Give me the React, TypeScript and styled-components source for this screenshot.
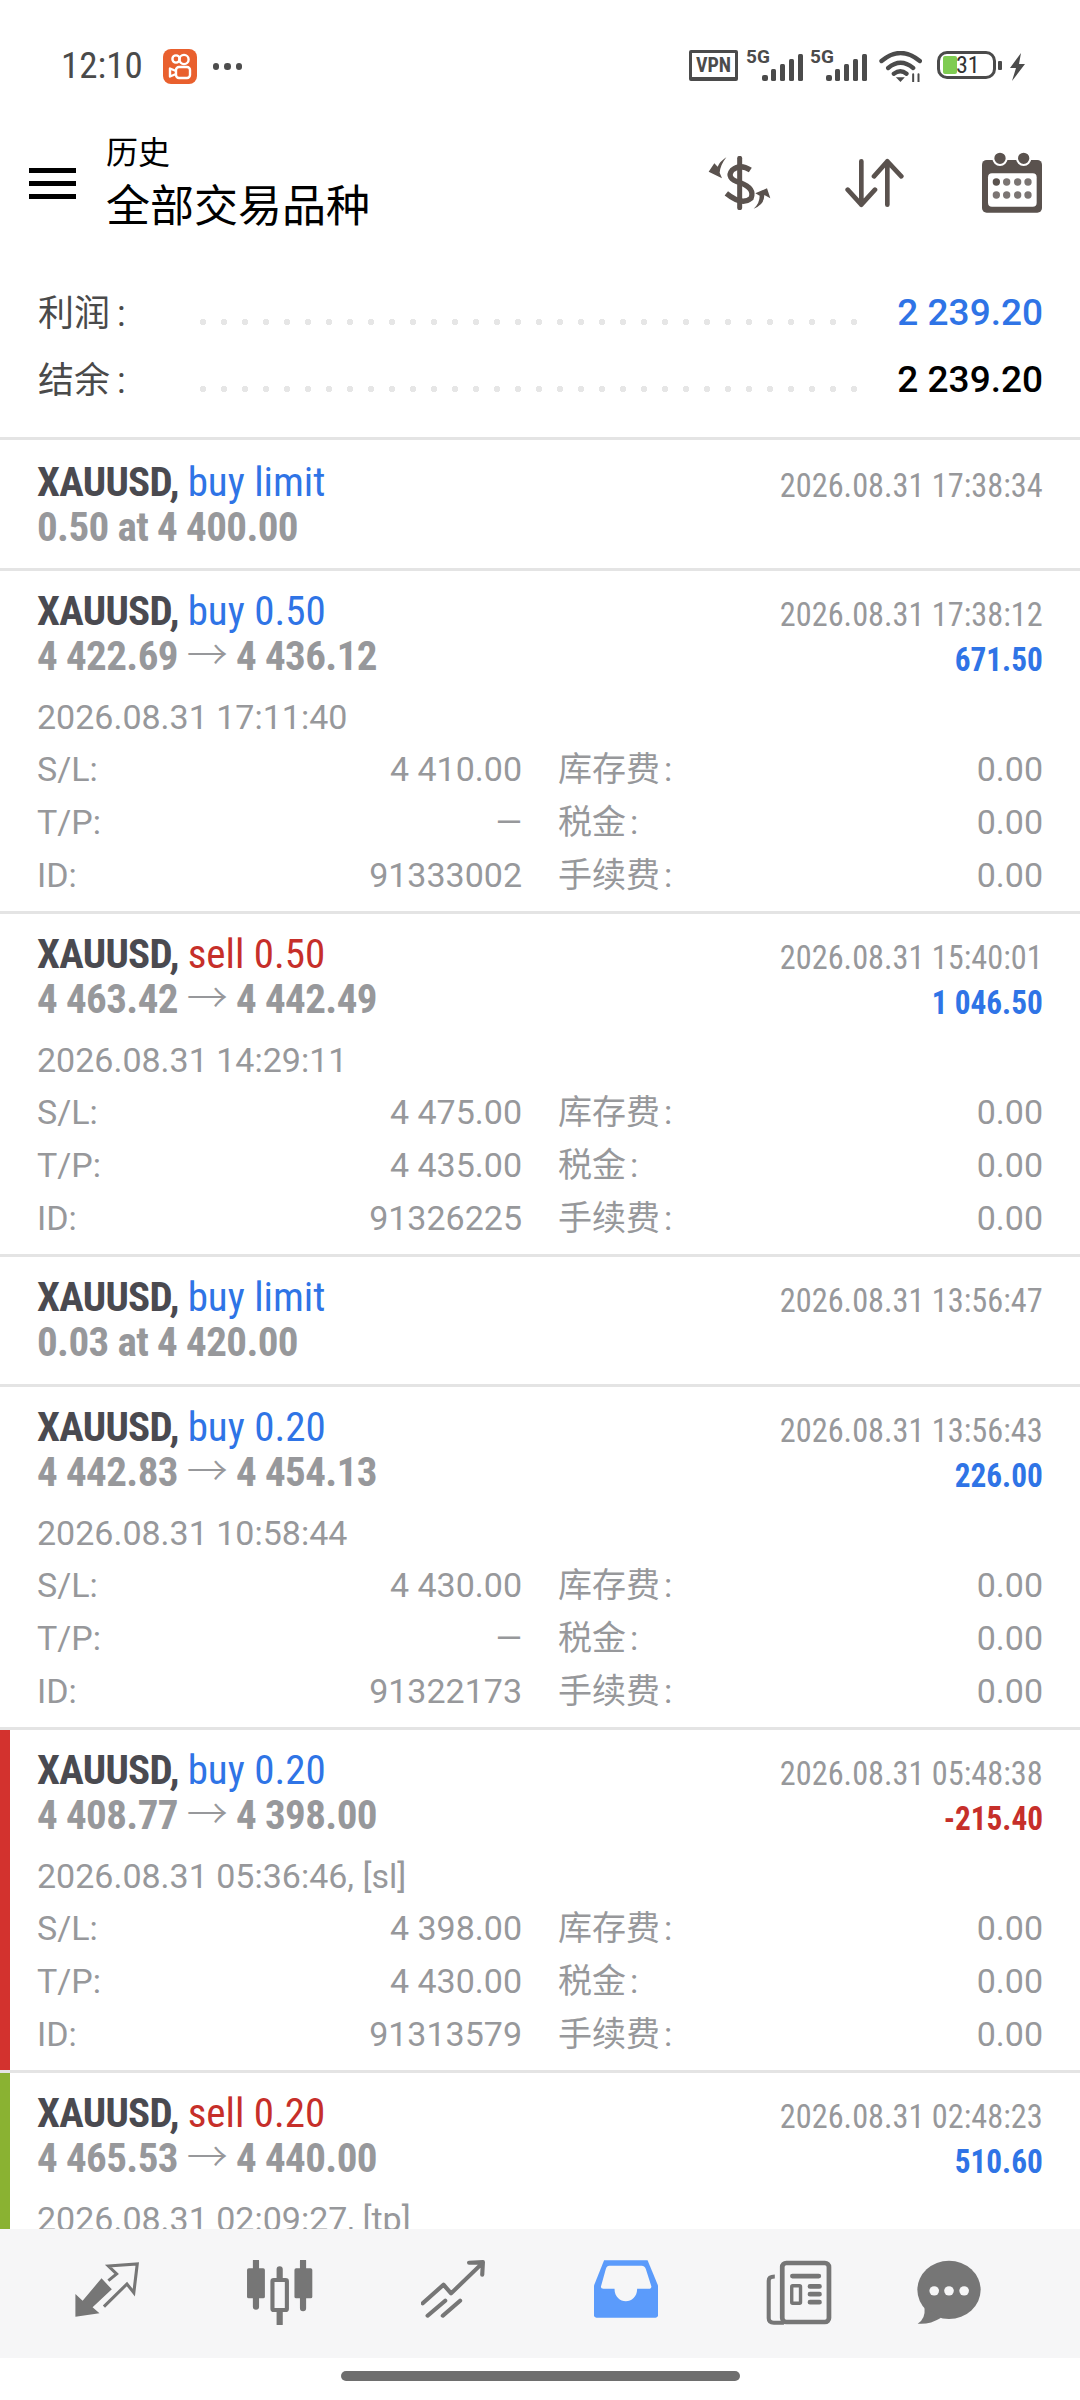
import React from "react";
import styled, { createGlobalStyle } from "styled-components";

const GlobalStyle = createGlobalStyle`
  html, body { margin: 0; padding: 0; background: #fff; }
  body { font-family: Roboto, "Noto Sans CJK SC", sans-serif; }
`;

const ICON = "#5a524e";
const TAB = "#767676";
const BLUE = "#2f74e6";
const RED = "#c62f2a";
const GRAY = "#97989b";
const CONDENSED = `"Roboto Condensed", Roboto, "Noto Sans CJK SC", sans-serif`;

const Page = styled.div`
  width: 1080px;
  height: 2400px;
  display: flex;
  flex-direction: column;
  overflow: hidden;
  background: #fff;
`;

const StatusBar = styled.div`
  height: 130px;
  flex: none;
  box-sizing: border-box;
  padding: 45px 54px 0 61px;
  display: flex;
  align-items: flex-start;
`;
const Clock = styled.span`
  font-family: ${CONDENSED};
  font-stretch: condensed;
  font-size: 37px;
  line-height: 42px;
  color: #4a4a4a;
`;
const AppBadge = styled.span`
  width: 34px;
  height: 35px;
  margin: 4px 0 0 20px;
  border-radius: 8px;
  background: #e9602e;
  display: flex;
  align-items: center;
  justify-content: center;
`;
const MoreDots = styled.span`
  margin: 18px 0 0 16px;
  display: flex;
  gap: 5px;
  i {
    width: 6.5px;
    height: 6.5px;
    border-radius: 50%;
    background: #4d4d4d;
  }
`;
const StatusIcons = styled.div`
  margin-left: auto;
  display: flex;
  align-items: flex-start;
  height: 40px;
`;
const VpnTag = styled.span`
  width: 49px;
  height: 31px;
  box-sizing: border-box;
  margin-top: 5px;
  border: 3px solid #4b4b4b;
  border-bottom-width: 4px;
  border-radius: 2px;
  font-size: 20px;
  font-weight: 700;
  line-height: 24px;
  text-align: center;
  color: #4b4b4b;
  font-family: ${CONDENSED};
`;
const SignalGroup = styled.span<{ $gap: number }>`
  position: relative;
  width: 57px;
  height: 31px;
  margin-top: 5px;
  margin-left: ${({ $gap }) => $gap}px;
  b {
    position: absolute;
    left: 0;
    top: -4px;
    font-size: 19px;
    line-height: 22px;
    font-weight: 700;
    color: #4b4b4b;
  }
  svg {
    position: absolute;
    right: 0;
    bottom: 0;
  }
`;
const WifiIcon = styled.svg`
  margin: 6px 0 0 12px;
`;
const Battery = styled.span`
  position: relative;
  width: 59px;
  height: 28px;
  box-sizing: border-box;
  margin: 6px 0 0 15px;
  border: 3px solid #4b4b4b;
  border-radius: 10px;
  i {
    position: absolute;
    left: 3px;
    top: 2px;
    width: 14px;
    height: 18px;
    background: #7fcc52;
    border-radius: 2px;
  }
  em {
    position: absolute;
    left: 16px;
    top: -3px;
    font-style: normal;
    font-size: 24px;
    line-height: 28px;
    color: #333;
    font-family: ${CONDENSED};
  }
`;
const BatteryCap = styled.span`
  width: 4px;
  height: 9px;
  margin: 16px 0 0 2px;
  background: #4b4b4b;
  border-radius: 1px;
`;
const BoltIcon = styled.svg`
  margin: 8px 0 0 7px;
`;

const Header = styled.header`
  height: 118px;
  flex: none;
  box-sizing: border-box;
  display: flex;
  align-items: flex-start;
  padding-left: 29px;
`;
const MenuButton = styled.span`
  width: 47px;
  height: 31px;
  margin-top: 38px;
  display: flex;
  flex-direction: column;
  justify-content: space-between;
  i {
    height: 5px;
    background: #000;
  }
`;
const Titles = styled.div`
  margin: 3px 0 0 30px;
  color: #000;
`;
const Crumb = styled.div`
  font-size: 32px;
  line-height: 40px;
`;
const Title = styled.div`
  margin-top: 6px;
  font-size: 44px;
  line-height: 56px;
`;
const HeaderActions = styled.div`
  margin-left: auto;
  margin-top: 22px;
  padding-right: 38px;
  display: flex;
  align-items: center;
  gap: 75px;
`;
const SortSlot = styled.span`
  display: flex;
  margin: 0 3px 0 -3px;
`;

const Colon = styled.span`
  margin-left: 4px;
`;
const Summary = styled.section`
  height: 189px;
  flex: none;
  box-sizing: border-box;
  padding: 41px 37px 0 38px;
  display: flex;
  flex-direction: column;
  gap: 23px;
`;
const SummaryRow = styled.div`
  display: flex;
  align-items: center;
  height: 44px;
`;
const SummaryLabel = styled.span`
  width: 162px;
  padding-bottom: 2px;
  font-size: 36px;
  color: #4a4a4a;
  flex: none;
  ${Colon} {
    margin-left: 7px;
  }
`;
const Leader = styled.span`
  width: 660px;
  height: 6px;
  margin-top: 22px;
  background: radial-gradient(circle at 3px 3px, #e6e6e6 3px, transparent 3.4px) 0 0 / 21px 6px repeat-x;
  flex: none;
`;
const SummaryValue = styled.span<{ $color: string }>`
  margin-left: auto;
  padding-top: 2px;
  font-size: 37px;
  font-weight: 500;
  color: ${({ $color }) => $color};
`;

const List = styled.div`
  flex: 1;
  min-height: 0;
  overflow: hidden;
`;
const Trade = styled.article<{ $mark?: string; $height: number }>`
  height: ${({ $height }) => $height}px;
  border-top: 3px solid #e4e4e4;
  padding: 0 37px;
  position: relative;
  &:first-child {
    height: ${({ $height }) => $height - 2}px;
    padding-top: 2px;
  }
  &::before {
    content: "";
    display: ${({ $mark }) => ($mark ? "block" : "none")};
    position: absolute;
    left: 0;
    top: 0;
    bottom: 0;
    width: 10px;
    background: ${({ $mark }) => $mark};
  }
`;
const HeadRow = styled.div`
  display: flex;
  justify-content: space-between;
  height: 45px;
  padding-top: 18px;
`;
const PriceRow = styled.div`
  display: flex;
  justify-content: space-between;
  height: 45px;
`;
const Heading = styled.div`
  font-family: ${CONDENSED};
  font-stretch: condensed;
  font-size: 41px;
  line-height: 45px;
  color: #4a4a50;
  font-weight: 700;
  letter-spacing: -0.7px;
`;
const Side = styled.span<{ $color: string }>`
  font-weight: 400;
  letter-spacing: 0;
  color: ${({ $color }) => $color};
`;
const Stamp = styled.div`
  margin-top: 3px;
  font-family: ${CONDENSED};
  font-stretch: condensed;
  font-size: 34px;
  line-height: 45px;
  color: ${GRAY};
  transform: scaleX(0.95);
  transform-origin: right center;
`;
const Prices = styled(Heading)`
  color: ${GRAY};
  letter-spacing: -0.6px;
`;
const Arrow = styled.span`
  font-family: "Noto Sans CJK SC", sans-serif;
  font-weight: 300;
  line-height: 0;
`;
const Profit = styled.div<{ $color: string }>`
  margin-top: 3px;
  font-family: ${CONDENSED};
  font-stretch: condensed;
  font-size: 34px;
  line-height: 45px;
  font-weight: 700;
  color: ${({ $color }) => $color};
  transform: scaleX(0.92);
  transform-origin: right center;
`;
const OpenTime = styled.div`
  margin-top: 16px;
  font-size: 34px;
  line-height: 44px;
  color: ${GRAY};
`;
const Details = styled.div`
  display: grid;
  grid-template-columns: 485px 485px;
  column-gap: 36px;
  margin-top: 4px;
  font-size: 34px;
  line-height: 53px;
  color: ${GRAY};
`;
const Cell = styled.div`
  display: flex;
  justify-content: space-between;
`;

const TabBar = styled.nav`
  height: 129px;
  flex: none;
  box-sizing: border-box;
  padding-left: 20px;
  background: #f6f6f7;
  display: grid;
  grid-template-columns: repeat(5, 173px) 127px;
  align-items: start;
`;
const TabSlot = styled.span`
  display: flex;
  justify-content: center;
  padding-top: 31px;
`;
const HomeArea = styled.div`
  height: 42px;
  flex: none;
  box-sizing: border-box;
  display: flex;
  justify-content: center;
  padding-top: 13px;
`;
const HomePill = styled.span`
  width: 399px;
  height: 10px;
  border-radius: 5px;
  background: #6e6e6e;
`;

type TradeData = {
  side: string;
  sideColor: string;
  line2: string;
  closed: string;
  height: number;
  profit?: string;
  profitColor?: string;
  opened?: string;
  sl?: string;
  tp?: string;
  id?: string;
  mark?: string;
};

const TRADES: TradeData[] = [
  { height: 128, side: "buy limit", sideColor: BLUE, line2: "0.50 at 4 400.00", closed: "2026.08.31 17:38:34" },
  { height: 340, side: "buy 0.50", sideColor: BLUE, line2: "4 422.69 → 4 436.12", closed: "2026.08.31 17:38:12", profit: "671.50", profitColor: BLUE, opened: "2026.08.31 17:11:40", sl: "4 410.00", tp: "—", id: "91333002" },
  { height: 340, side: "sell 0.50", sideColor: RED, line2: "4 463.42 → 4 442.49", closed: "2026.08.31 15:40:01", profit: "1 046.50", profitColor: BLUE, opened: "2026.08.31 14:29:11", sl: "4 475.00", tp: "4 435.00", id: "91326225" },
  { height: 127, side: "buy limit", sideColor: BLUE, line2: "0.03 at 4 420.00", closed: "2026.08.31 13:56:47" },
  { height: 340, side: "buy 0.20", sideColor: BLUE, line2: "4 442.83 → 4 454.13", closed: "2026.08.31 13:56:43", profit: "226.00", profitColor: BLUE, opened: "2026.08.31 10:58:44", sl: "4 430.00", tp: "—", id: "91322173" },
  { height: 340, side: "buy 0.20", sideColor: BLUE, line2: "4 408.77 → 4 398.00", closed: "2026.08.31 05:48:38", profit: "-215.40", profitColor: RED, opened: "2026.08.31 05:36:46, [sl]", sl: "4 398.00", tp: "4 430.00", id: "91313579", mark: "#d3322e" },
  { height: 340, side: "sell 0.20", sideColor: RED, line2: "4 465.53 → 4 440.00", closed: "2026.08.31 02:48:23", profit: "510.60", profitColor: BLUE, opened: "2026.08.31 02:09:27, [tp]", mark: "#8ab232" },
];

const PriceLine = ({ text }: { text: string }) => {
  const [from, to] = text.split(" → ");
  if (!to) return <Prices>{text}</Prices>;
  return (
    <Prices>
      {from} <Arrow>→</Arrow> {to}
    </Prices>
  );
};

const TradeRow = ({ t }: { t: TradeData }) => (
  <Trade $mark={t.mark} $height={t.height}>
    <HeadRow>
      <Heading>
        XAUUSD, <Side $color={t.sideColor}>{t.side}</Side>
      </Heading>
      <Stamp>{t.closed}</Stamp>
    </HeadRow>
    <PriceRow>
      <PriceLine text={t.line2} />
      {t.profit && <Profit $color={t.profitColor!}>{t.profit}</Profit>}
    </PriceRow>
    {t.opened && <OpenTime>{t.opened}</OpenTime>}
    {t.sl && (
      <Details>
        <Cell><span>S/L:</span><span>{t.sl}</span></Cell>
        <Cell><span>库存费<Colon>:</Colon></span><span>0.00</span></Cell>
        <Cell><span>T/P:</span><span>{t.tp}</span></Cell>
        <Cell><span>税金<Colon>:</Colon></span><span>0.00</span></Cell>
        <Cell><span>ID:</span><span>{t.id}</span></Cell>
        <Cell><span>手续费<Colon>:</Colon></span><span>0.00</span></Cell>
      </Details>
    )}
  </Trade>
);

const SignalBars = () => (
  <svg width="41" height="27" viewBox="0 0 41 27">
    <g fill="#4b4b4b">
      <rect x="0" y="21" width="6" height="6" rx="2" />
      <rect x="9" y="15" width="5" height="12" rx="1.5" />
      <rect x="18" y="10" width="5" height="17" rx="1.5" />
      <rect x="27" y="5" width="5" height="22" rx="1.5" />
      <rect x="36" y="0" width="5" height="27" rx="1.5" />
    </g>
  </svg>
);

const DollarIcon = () => (
  <svg width="65" height="54" viewBox="200 378 195 162" fill={ICON}>
    <path d="M298 385V533" stroke={ICON} strokeWidth="15" strokeLinecap="round" fill="none" />
    <path d="M330 420Q300 400 276 420Q255 445 300 458Q345 475 332 505Q305 528 258 490" stroke={ICON} strokeWidth="16" fill="none" />
    <path d="M258 382Q238 395 232 410L222 400L205 425L245 445L238 428Q240 405 258 382Z" />
    <path d="M340 536Q372 525 372 495L390 505L380 475L345 490L358 497Q358 520 340 536Z" />
  </svg>
);

const SortIcon = () => (
  <svg width="60" height="50" viewBox="615 385 180 150" fill="none" stroke={ICON} strokeWidth="14" strokeLinecap="round" strokeLinejoin="round">
    <path d="M667 395V525M626 480L667 525L708 480M745 395V525M705 440L745 395L787 440" />
  </svg>
);

const CalendarIcon = () => (
  <svg width="60" height="61" viewBox="1020 366 180 183">
    <rect x="1020" y="390" width="180" height="158" rx="14" fill={ICON} />
    <rect x="1038" y="430" width="146" height="100" rx="12" fill="#fff" />
    <circle cx="1074" cy="385" r="20" fill={ICON} stroke="#fff" strokeWidth="6" />
    <circle cx="1145" cy="385" r="20" fill={ICON} stroke="#fff" strokeWidth="6" />
    <g fill="#7b7573">
      <circle cx="1063" cy="456" r="11" fill={ICON} />
      <circle cx="1094" cy="456" r="11" />
      <circle cx="1127" cy="456" r="11" />
      <circle cx="1158" cy="456" r="11" />
      <circle cx="1063" cy="495" r="11" />
      <circle cx="1094" cy="495" r="11" />
      <circle cx="1127" cy="495" r="11" />
      <circle cx="1158" cy="495" r="11" />
    </g>
  </svg>
);

const TradeTabIcon = () => (
  <svg width="67" height="60" viewBox="215 250 195 180" preserveAspectRatio="none">
    <path d="M222 420V352L243 372L298 305L328 338L272 392L292 410Z" fill={TAB} />
    <path d="M305 390L372 322L392 348L402 262L318 268L342 292L318 312" fill="none" stroke={TAB} strokeWidth="9" />
  </svg>
);

const QuotesTabIcon = () => (
  <svg width="67" height="65" viewBox="715 240 195 195" preserveAspectRatio="none">
    <path d="M744 243V380M881 243V385M813 268V432" stroke={TAB} strokeWidth="18" strokeLinecap="round" />
    <rect x="718" y="265" width="52" height="90" rx="5" fill={TAB} />
    <rect x="856" y="265" width="52" height="90" rx="5" fill={TAB} />
    <rect x="792" y="300" width="42" height="90" rx="4" fill="#f6f6f7" stroke={TAB} strokeWidth="12" />
  </svg>
);

const ChartTabIcon = () => (
  <svg width="64" height="59" viewBox="1225 248 185 177" preserveAspectRatio="none" fill="none" stroke={TAB} strokeWidth="12" strokeLinecap="round" strokeLinejoin="round">
    <path d="M1230 378L1290 322L1312 348L1398 262M1364 256L1404 254L1402 292M1244 415L1295 370M1288 415L1338 370" />
  </svg>
);

const HistoryTabIcon = () => (
  <svg width="64" height="58" viewBox="161 248 184 175" preserveAspectRatio="none">
    <path d="M190 249H315L345 325V415Q345 422 338 422H168Q161 422 161 415V325Z" fill="#5b9bfb" />
    <path d="M205 265H298Q306 265 310 275L326 328Q326 335 318 335H285C285 385 220 385 220 335H188Q180 335 181 328L195 275Q198 265 205 265Z" fill="#f6f6f7" />
  </svg>
);

const NewsTabIcon = () => (
  <svg width="66" height="65" viewBox="662 238 195 194" preserveAspectRatio="none" fill="none" stroke={TAB}>
    <rect x="710" y="247" width="138" height="176" rx="12" strokeWidth="14" />
    <path d="M688 287Q670 287 670 300V412Q670 425 685 425H715" strokeWidth="12" />
    <path d="M740 286H818M792 317H820M792 340H820M792 364H820" strokeWidth="14" strokeLinecap="round" />
    <rect x="738" y="315" width="26" height="52" rx="3" strokeWidth="10" />
  </svg>
);

const ChatTabIcon = () => (
  <svg width="64" height="65" viewBox="1100 238 186 194" preserveAspectRatio="none">
    <ellipse cx="1193" cy="327" rx="92" ry="87" fill={TAB} />
    <path d="M1122 380Q1125 415 1102 428Q1135 432 1170 410Z" fill={TAB} />
    <g fill="#f6f6f7">
      <circle cx="1150" cy="330" r="14" />
      <circle cx="1193" cy="330" r="14" />
      <circle cx="1237" cy="330" r="14" />
    </g>
  </svg>
);

export default function App() {
  return (
    <Page>
      <GlobalStyle />
      <StatusBar>
        <Clock>12:10</Clock>
        <AppBadge>
          <svg width="24" height="27" viewBox="0 0 24 27" fill="none" stroke="#fff" strokeWidth="2.4" strokeLinejoin="round">
            <circle cx="8" cy="6" r="3.6" />
            <circle cx="16" cy="6.5" r="4.6" />
            <rect x="8" y="14" width="14" height="11" rx="3" />
            <path d="M8 18L2 15.5V23.5L8 21" />
          </svg>
        </AppBadge>
        <MoreDots><i /><i /><i /></MoreDots>
        <StatusIcons>
          <VpnTag>VPN</VpnTag>
          <SignalGroup $gap={8}><b>5G</b><SignalBars /></SignalGroup>
          <SignalGroup $gap={7}><b>5G</b><SignalBars /></SignalGroup>
          <WifiIcon width="43" height="31" viewBox="718 62 128 93" fill="none" stroke="#4b4b4b" strokeLinecap="round">
            <path d="M725 92Q782 44 840 92M745 113Q782 82 820 113M762 130Q782 116 800 130" strokeWidth="13" />
            <path d="M768 141H795L782 155Z" fill="#4b4b4b" stroke="none" />
            <path d="M820 132V155M836 132V155" strokeWidth="6" />
          </WifiIcon>
          <Battery><i /><em>31</em></Battery>
          <BatteryCap />
          <BoltIcon width="17" height="28" viewBox="0 0 17 28" fill="#4b4b4b">
            <path d="M12 0L1 15H7L3 28L16 11H10Z" />
          </BoltIcon>
        </StatusIcons>
      </StatusBar>

      <Header>
        <MenuButton><i /><i /><i /></MenuButton>
        <Titles>
          <Crumb>历史</Crumb>
          <Title>全部交易品种</Title>
        </Titles>
        <HeaderActions>
          <DollarIcon />
          <SortSlot><SortIcon /></SortSlot>
          <CalendarIcon />
        </HeaderActions>
      </Header>

      <Summary>
        <SummaryRow>
          <SummaryLabel>利润<Colon>:</Colon></SummaryLabel>
          <Leader />
          <SummaryValue $color={BLUE}>2 239.20</SummaryValue>
        </SummaryRow>
        <SummaryRow>
          <SummaryLabel>结余<Colon>:</Colon></SummaryLabel>
          <Leader />
          <SummaryValue $color="#000">2 239.20</SummaryValue>
        </SummaryRow>
      </Summary>

      <List>
        {TRADES.map((t) => (
          <TradeRow key={t.closed} t={t} />
        ))}
      </List>

      <TabBar>
        <TabSlot><TradeTabIcon /></TabSlot>
        <TabSlot><QuotesTabIcon /></TabSlot>
        <TabSlot><ChartTabIcon /></TabSlot>
        <TabSlot><HistoryTabIcon /></TabSlot>
        <TabSlot><NewsTabIcon /></TabSlot>
        <TabSlot><ChatTabIcon /></TabSlot>
      </TabBar>
      <HomeArea><HomePill /></HomeArea>
    </Page>
  );
}
